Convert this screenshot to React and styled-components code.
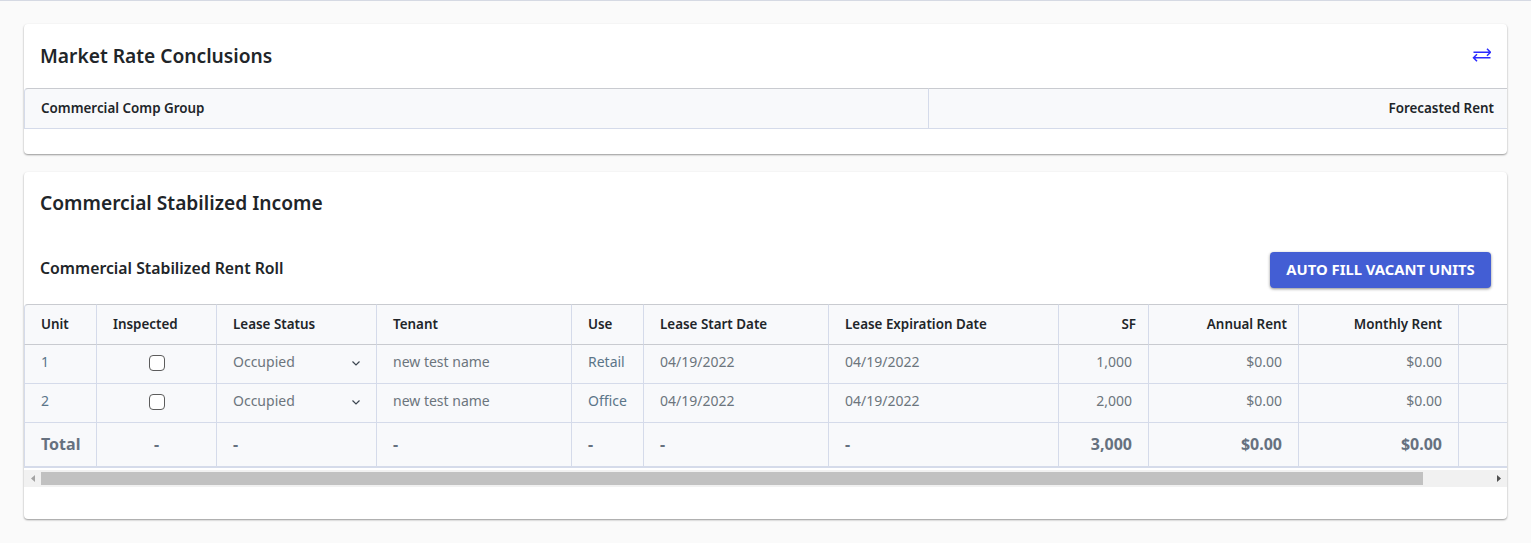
import React from "react";
import styled, { createGlobalStyle } from "styled-components";

const GlobalStyle = createGlobalStyle`
  html, body {
    margin: 0;
    padding: 0;
    background: #fafafa;
    font-family: "Noto Sans", "Open Sans", sans-serif;
    overflow: hidden;
  }
`;

const Page = styled.div`
  border-top: 1px solid #d5d9e3;
  padding: 23px 24px 24px;
  display: flex;
  flex-direction: column;
  gap: 18px;
`;

const Card = styled.section`
  background: #fff;
  border-radius: 4px;
  box-shadow: 0 1px 2px rgba(0, 0, 0, 0.4);
  padding-bottom: ${(props) => props.$bottom}px;
`;

const CardHeader = styled.div`
  height: ${(props) => props.$height}px;
  padding: 0 16px 2px;
  display: flex;
  align-items: center;
  justify-content: space-between;
  box-sizing: border-box;
`;

const Title = styled.h2`
  margin: 0;
  font-size: 19.2px;
  font-weight: 600;
  color: #212529;
`;

const SwapButton = styled.button`
  background: none;
  border: 0;
  padding: 0;
  width: 20px;
  height: 16px;
  display: block;
  color: #2a2aff;
`;

const SubHeader = styled.div`
  height: 36px;
  margin: 18px 0 16px;
  padding: 0 16px;
  display: flex;
  align-items: center;
  justify-content: space-between;
`;

const SubTitle = styled.h3`
  margin: 0 0 4px;
  font-size: 15.8px;
  font-weight: 600;
  color: #212529;
`;

const FillButton = styled.button`
  width: 221px;
  height: 36px;
  background: #435ed4;
  color: #fff;
  border: 0;
  border-radius: 4px;
  font-family: inherit;
  font-size: 14.8px;
  font-weight: 700;
  white-space: nowrap;
  padding: 0 0 2px;
  box-shadow: 0 1px 3px rgba(0, 0, 0, 0.45);
`;

const TableWrap = styled.div`
  overflow: hidden;
`;

const Table = styled.table`
  border-collapse: separate;
  border-spacing: 0;
  table-layout: fixed;
  width: ${(props) => props.$width};
  background: #f8f9fb;
  border-radius: 4px;
`;

const Head = styled.th`
  height: 41px;
  box-sizing: border-box;
  padding: 0 ${(props) => props.$pad || 16}px 2px 16px;
  font-size: 13.4px;
  font-weight: 600;
  color: #212529;
  text-align: ${(props) => props.$align || "left"};
  border-top: 1px solid #c9cbd0;
  border-bottom: 1px solid ${(props) => props.$bottom || "#c9cbd0"};
  border-left: 1px solid #d5dbea;
  &:first-child {
    border-top-left-radius: 4px;
  }
`;

const Cell = styled.td`
  height: 39px;
  box-sizing: border-box;
  padding: 0 16px 6px;
  font-size: 14px;
  color: #6c757d;
  text-align: ${(props) => props.$align || "left"};
  border-bottom: 1px solid #d5dbea;
  border-left: 1px solid #d5dbea;
`;

const TotalCell = styled.td`
  height: 45px;
  box-sizing: border-box;
  padding: 0 16px 1px;
  font-size: 16px;
  font-weight: 700;
  color: #66717f;
  text-align: ${(props) => props.$align || "left"};
  border-bottom: 2px solid #d5dbea;
  border-left: 1px solid #d5dbea;
`;

const Link = styled.span`
  color: #5b7589;
`;

const Check = styled.span`
  display: block;
  width: 16px;
  height: 16px;
  margin: 3px auto 0;
  box-sizing: border-box;
  border: 1px solid #5c5c5c;
  border-radius: 4px;
  background: #fff;
`;

const StatusSelect = styled.div`
  display: flex;
  align-items: center;
  justify-content: space-between;
`;

const Chevron = styled.svg`
  width: 8px;
  height: 5px;
  margin: 5px 0 0;
  color: #3c4650;
`;

const ScrollBar = styled.div`
  height: 17px;
  margin-top: 2px;
  background: #f1f1f1;
  display: flex;
  align-items: center;
`;

const ScrollArrow = styled.span`
  width: 17px;
  flex: none;
  display: flex;
  justify-content: center;
  svg {
    display: block;
    width: 4px;
    height: 7px;
    fill: ${(props) => props.$color};
  }
`;

const ScrollTrack = styled.div`
  flex: 1;
  height: 13px;
`;

const ScrollThumb = styled.div`
  height: 100%;
  background: #c1c1c1;
  width: ${(props) => props.$width}px;
`;

const cols = [72, 120, 160, 195, 72, 185, 230, 90, 150, 160, 110];

const rows = [
  { unit: "1", use: "Retail", sf: "1,000" },
  { unit: "2", use: "Office", sf: "2,000" },
];

const heads = [
  ["Unit"],
  ["Inspected"],
  ["Lease Status"],
  ["Tenant"],
  ["Use"],
  ["Lease Start Date"],
  ["Lease Expiration Date"],
  ["SF", "right", 12],
  ["Annual Rent", "right", 11],
  ["Monthly Rent", "right"],
  [""],
];

const App = () => {
  return (
    <>
      <GlobalStyle />
      <Page>
        <Card $bottom={25}>
          <CardHeader $height={64}>
            <Title>Market Rate Conclusions</Title>
            <SwapButton aria-label="swap">
              <svg width="20" height="16" viewBox="0 0 20 16" fill="none" stroke="currentColor" strokeWidth="1.5">
                <path d="M2.5 5.2H19.5M16 1.7l3.5 3.5L16 8.7" />
                <path d="M19.5 10.7H2.5M6 7.2l-3.5 3.5L6 14.2" />
              </svg>
            </SwapButton>
          </CardHeader>
          <TableWrap>
            <Table $width="100%">
              <colgroup>
                <col style={{ width: "60.95%" }} />
                <col />
              </colgroup>
              <thead>
                <tr>
                  <Head $bottom="#d5dbea">Commercial Comp Group</Head>
                  <Head $align="right" $bottom="#d5dbea" $pad={13}>Forecasted Rent</Head>
                </tr>
              </thead>
            </Table>
          </TableWrap>
        </Card>

        <Card $bottom={32}>
          <CardHeader $height={62}>
            <Title>Commercial Stabilized Income</Title>
          </CardHeader>
          <SubHeader>
            <SubTitle>Commercial Stabilized Rent Roll</SubTitle>
            <FillButton>AUTO FILL VACANT UNITS</FillButton>
          </SubHeader>
          <TableWrap>
            <Table $width="1544px">
              <colgroup>
                {cols.map((w, i) => (
                  <col key={i} style={{ width: w }} />
                ))}
              </colgroup>
              <thead>
                <tr>
                  {heads.map(([label, align, pad], i) => (
                    <Head key={i} $align={align} $pad={pad}>{label}</Head>
                  ))}
                </tr>
              </thead>
              <tbody>
                {rows.map((row) => (
                  <tr key={row.unit}>
                    <Cell><Link>{row.unit}</Link></Cell>
                    <Cell><Check /></Cell>
                    <Cell>
                      <StatusSelect>
                        Occupied
                        <Chevron viewBox="0 0 8 5" fill="none" stroke="currentColor" strokeWidth="1.2">
                          <path d="M0.5 0.5L4 4l3.5-3.5" />
                        </Chevron>
                      </StatusSelect>
                    </Cell>
                    <Cell>new test name</Cell>
                    <Cell><Link>{row.use}</Link></Cell>
                    <Cell>04/19/2022</Cell>
                    <Cell>04/19/2022</Cell>
                    <Cell $align="right">{row.sf}</Cell>
                    <Cell $align="right">$0.00</Cell>
                    <Cell $align="right">$0.00</Cell>
                    <Cell />
                  </tr>
                ))}
                <tr>
                  <TotalCell>Total</TotalCell>
                  <TotalCell $align="center">-</TotalCell>
                  <TotalCell>-</TotalCell>
                  <TotalCell>-</TotalCell>
                  <TotalCell>-</TotalCell>
                  <TotalCell>-</TotalCell>
                  <TotalCell>-</TotalCell>
                  <TotalCell $align="right">3,000</TotalCell>
                  <TotalCell $align="right">$0.00</TotalCell>
                  <TotalCell $align="right">$0.00</TotalCell>
                  <TotalCell />
                </tr>
              </tbody>
            </Table>
          </TableWrap>
          <ScrollBar>
            <ScrollArrow $color="#a3a3a3">
              <svg viewBox="0 0 4 7"><path d="M4 0v7L0 3.5z" /></svg>
            </ScrollArrow>
            <ScrollTrack>
              <ScrollThumb $width={1382} />
            </ScrollTrack>
            <ScrollArrow $color="#505050">
              <svg viewBox="0 0 4 7"><path d="M0 0v7l4-3.5z" /></svg>
            </ScrollArrow>
          </ScrollBar>
        </Card>
      </Page>
    </>
  );
};

export default App;
